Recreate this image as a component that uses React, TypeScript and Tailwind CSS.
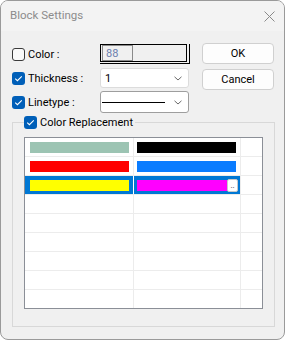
import React from "react";

const font = { fontFamily: 'Roboto, "Noto Sans", sans-serif' };

function Check({ checked }: { checked: boolean }) {
  if (checked) {
    return (
      <div className="w-[13px] h-[13px] rounded-[3px] bg-[#005fb8] flex items-center justify-center shrink-0">
        <svg width="13" height="13" viewBox="0 0 13 13">
          <path d="M3.2 6.6 L5.4 8.7 L9.8 4.3" fill="none" stroke="#ffffff" strokeWidth="1.1" />
        </svg>
      </div>
    );
  }
  return <div className="w-[13px] h-[13px] rounded-[3px] border border-[#3a3a3a] bg-[#fafafa] shrink-0" />;
}

function Chevron() {
  return (
    <svg width="8" height="5" viewBox="0 0 8 5" className="shrink-0">
      <path d="M0.5 0.8 L4 4 L7.5 0.8" fill="none" stroke="#6a6a6a" strokeWidth="1" />
    </svg>
  );
}

type Cell = { color: string } | null;

const rows: [Cell, Cell][] = [
  [{ color: "#9cc4b3" }, { color: "#000000" }],
  [{ color: "#ff0000" }, { color: "#0a7cff" }],
  [{ color: "#ffff00" }, { color: "#ff00ff" }],
  [null, null],
  [null, null],
  [null, null],
  [null, null],
  [null, null],
  [null, null],
];

export default function App() {
  return (
    <div className="w-[286px] h-[341px] bg-white" style={font}>
      <div className="w-[285px] h-[340px] border border-[#9a9a9a] rounded-[8px] overflow-hidden bg-[#f0f0f0] flex flex-col">
        {/* Title bar */}
        <div className="h-[30px] bg-[#f3f3f3] flex items-center justify-between pl-[9px] pr-[9px] shrink-0">
          <span className="text-[11.5px] text-[#8c8c8c] leading-none">Block Settings</span>
          <svg width="11" height="11" viewBox="0 0 11 11">
            <path d="M0.5 0.5 L10.5 10.5 M10.5 0.5 L0.5 10.5" stroke="#8a8a8a" strokeWidth="1" />
          </svg>
        </div>

        {/* Top section */}
        <div className="flex pt-[12px] pl-[11px]">
          <div className="flex flex-col">
            {/* Color row */}
            <div className="mt-[1px] h-[20px] flex items-center">
              <div className="w-[88px] flex items-center gap-[3px]">
                <Check checked={false} />
                <span className="text-[11px] text-black leading-none">Color :</span>
              </div>
              <div className="w-[90px] h-[20px] border-r border-b border-black">
                <div className="w-[87px] h-[18px] border border-black bg-[#f0f0f0] flex items-center pl-[1px]">
                  <div className="w-[31px] h-[16px] border border-[#8a8a8a] flex items-center pl-[3px]">
                    <span className="text-[11px] text-[#6c7fae] leading-none">88</span>
                  </div>
                </div>
              </div>
            </div>
            {/* Thickness row */}
            <div className="mt-[4px] h-[20px] flex items-center">
              <div className="w-[88px] flex items-center gap-[3px]">
                <Check checked={true} />
                <span className="text-[11px] text-black leading-none">Thickness :</span>
              </div>
              <div className="w-[89px] h-[20px] bg-white border border-[#dcdcdc] rounded-[3px] flex items-center justify-between pl-[4px] pr-[6px]">
                <span className="text-[11px] text-black leading-none">1</span>
                <Chevron />
              </div>
            </div>
            {/* Linetype row */}
            <div className="mt-[3px] h-[22px] flex items-center">
              <div className="w-[88px] flex items-center gap-[3px]">
                <Check checked={true} />
                <span className="text-[11px] text-black leading-none">Linetype :</span>
              </div>
              <div className="w-[89px] h-[22px] bg-white border border-[#9e9e9e] rounded-[3px] flex items-center justify-between pl-[1px] pr-[6px]">
                <div className="w-[63px] h-[1px] bg-black" />
                <Chevron />
              </div>
            </div>
          </div>
          <div className="flex flex-col ml-[12px]">
            <button className="w-[72px] h-[21px] bg-[#fdfdfd] border border-[#d0d0d0] rounded-[4px] text-[11px] text-black leading-none flex items-center justify-center">
              OK
            </button>
            <button className="mt-[5px] w-[72px] h-[21px] bg-[#fdfdfd] border border-[#d0d0d0] rounded-[4px] text-[11px] text-black leading-none flex items-center justify-center">
              Cancel
            </button>
          </div>
        </div>

        {/* Group box */}
        <fieldset className="mt-[2px] ml-[11px] w-[263px] h-[212px] border border-[#d8d8d8]">
          <legend className="ml-[11px] pr-[2px] flex items-center gap-[3px] h-[14px]">
            <Check checked={true} />
            <span className="text-[11px] text-black leading-none">Color Replacement</span>
          </legend>
          <div className="mt-[8px] ml-[11px] w-[239px] h-[172px] border border-[#8b8f97] bg-white overflow-hidden">
            {rows.map((r, i) => {
              const sel = i === 2;
              return (
                <div key={i} className="h-[19px] flex border-b border-[#ececec]">
                  <div
                    className={`w-[109px] h-full border-r ${sel ? "bg-[#0078d4] border-white" : "border-[#ececec]"} pl-[5px] pt-[4px]`}
                  >
                    {r[0] && <div className="w-[99px] h-[11px]" style={{ backgroundColor: r[0].color }} />}
                  </div>
                  <div
                    className={`w-[107px] h-full border-r border-[#ececec] ${sel ? "bg-[#0078d4]" : ""} pl-[3px] ${sel ? "pt-[3px]" : "pt-[4px]"}`}
                  >
                    {r[1] && !sel && <div className="w-[99px] h-[11px]" style={{ backgroundColor: r[1].color }} />}
                    {r[1] && sel && (
                      <div className="flex items-start">
                        <div className="mt-[1px] w-[90px] h-[11px]" style={{ backgroundColor: r[1].color }} />
                        <div className="w-[11px] h-[13px] bg-white rounded-[2px] border border-[#c8c8c8] flex items-end justify-center pb-[1px]">
                          <span className="text-[8px] leading-none text-[#333]">..</span>
                        </div>
                      </div>
                    )}
                  </div>
                  <div className="flex-1 h-full" />
                </div>
              );
            })}
          </div>
        </fieldset>
      </div>
    </div>
  );
}
